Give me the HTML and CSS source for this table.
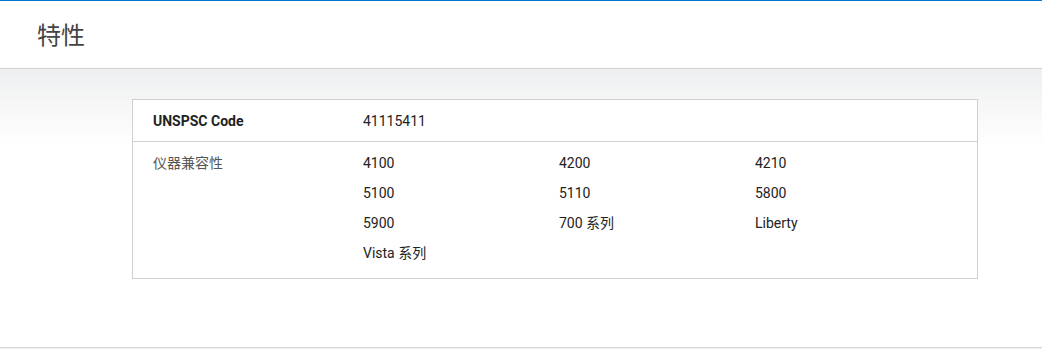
FILE: index.html
```html
<!DOCTYPE html>
<html lang="zh">
<head>
<meta charset="utf-8">
<link rel="stylesheet" href="styles.css">
</head>
<body>
<header class="page-header">
  <h1 class="title">特性</h1>
</header>
<section class="specs">
  <div class="table">
    <div class="row row-code">
      <div class="label label-bold">UNSPSC Code</div>
      <div class="value">41115411</div>
    </div>
    <div class="row row-compat">
      <div class="label">仪器兼容性</div>
      <div class="value grid">
        <span>4100</span><span>4200</span><span>4210</span>
        <span>5100</span><span>5110</span><span>5800</span>
        <span>5900</span><span>700 系列</span><span>Liberty</span>
        <span>Vista 系列</span>
      </div>
    </div>
  </div>
</section>
<div class="footer-band"></div>
</body>
</html>
```

FILE: styles.css
```css
html, body {
  margin: 0;
  padding: 0;
  background: #fff;
  font-family: Roboto, "Noto Sans CJK SC", "Liberation Sans", sans-serif;
  color: #333;
}
.page-header {
  border-top: 1px solid #0076ce;
  border-bottom: 1px solid #d2d2d2;
  height: 67px;
  display: flex;
  align-items: center;
  padding-left: 37px;
}
.title {
  margin: 0;
  font-family: "Noto Sans CJK SC", sans-serif;
  font-weight: 400;
  font-size: 24px;
  line-height: 30px;
  color: #444;
  position: relative;
  top: -1px;
}
.specs {
  background: linear-gradient(#eeeff0 0, #ffffff 78px);
  padding: 30px 64px 68px 132px;
  border-bottom: 1px solid #d6d6d6;
}
.table {
  border: 1px solid #cfcfcf;
  background: #fff;
  width: 844px;
}
.row {
  display: flex;
  padding: 0 20px;
  font-size: 14px;
}
.row-code {
  padding-top: 11px;
  padding-bottom: 10px;
  line-height: 20px;
  border-bottom: 1px solid #cfcfcf;
}
.row-compat {
  padding-top: 6px;
  padding-bottom: 10px;
  line-height: 30px;
}
.label {
  width: 210px;
  flex: none;
  color: #555;
  font-family: Roboto, "Noto Sans CJK SC", sans-serif;
}
.label-bold {
  font-weight: 700;
  color: #222;
}
.value {
  color: #222;
}
.grid {
  display: grid;
  grid-template-columns: 196px 196px 196px;
}
.footer-band {
  height: 2px;
  background: #eeeeee;
}
```
